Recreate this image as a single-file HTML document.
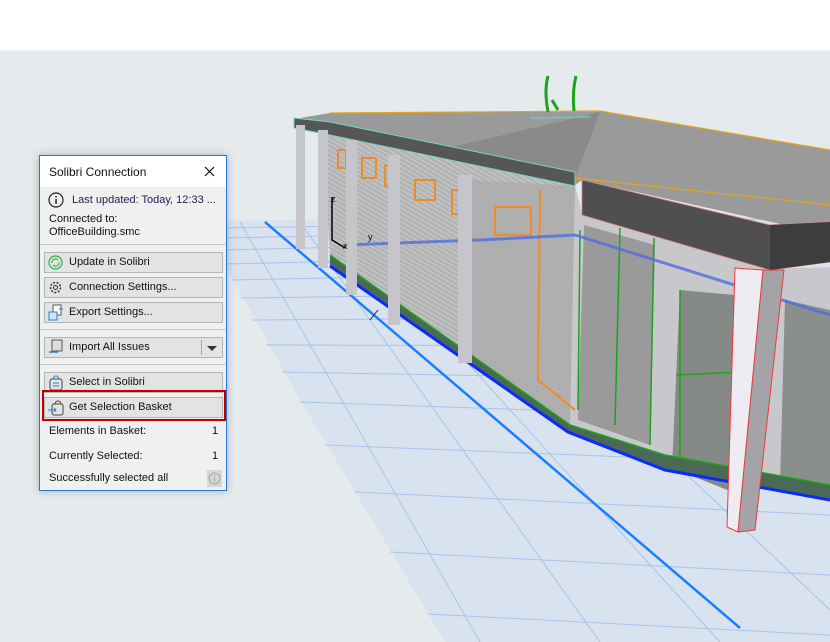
<!DOCTYPE html>
<html><head><style>
body{margin:0;width:830px;height:642px;overflow:hidden;background:#fff;font-family:"Liberation Sans",sans-serif;position:relative}
#scene{position:absolute;left:0;top:0}
.panel{position:absolute;left:39px;top:155px;width:186px;height:334px;background:#f0f0f0;border:1px solid #1f7ad6;box-shadow:0 0 8px rgba(0,0,0,.25);font-size:11px;color:#111}
.tb{position:absolute;left:0;top:0;right:0;height:31px;background:#fff}
.t{position:absolute;white-space:nowrap}
.btn{position:absolute;left:4px;width:177px;height:19px;border:1px solid #b5b5b5;background:#e3e3e3}
.btn span{position:absolute;left:24px;top:3px}
.sep{position:absolute;left:0;right:0;height:1px;background:#c8c8c8}
</style></head><body>
<svg id="scene" width="830" height="642" viewBox="0 0 830 642">
<defs>
<pattern id="h" width="4" height="4" patternUnits="userSpaceOnUse" patternTransform="rotate(-60)"><rect width="4" height="4" fill="#b4b4b4"/><line x1="0" y1="0" x2="0" y2="4" stroke="#d8d8d8" stroke-width="1.2"/></pattern>
</defs>
<rect x="0" y="50" width="830" height="592" fill="#e5eaed"/>
<rect x="0" y="50" width="830" height="1" fill="#f2f4f5"/>
<!-- ground grid -->
<polygon points="222,221 830,212 830,642 445,642 300,400 222,260" fill="#d9e3ef"/>
<g stroke="#a8c2ea" stroke-width="1" fill="none">
<line x1="222" y1="228" x2="830" y2="218"/><line x1="222" y1="238" x2="830" y2="226"/>
<line x1="222" y1="250" x2="830" y2="236"/><line x1="225" y1="264" x2="830" y2="250"/>
<line x1="232" y1="280" x2="830" y2="268"/><line x1="241" y1="298" x2="830" y2="290"/>
<line x1="252" y1="320" x2="830" y2="316"/><line x1="266" y1="345" x2="830" y2="346"/>
<line x1="282" y1="372" x2="830" y2="382"/><line x1="300" y1="402" x2="830" y2="420"/>
<line x1="325" y1="445" x2="830" y2="465"/><line x1="355" y1="492" x2="830" y2="515"/>
<line x1="390" y1="552" x2="830" y2="575"/><line x1="428" y1="614" x2="830" y2="635"/>
<line x1="240" y1="222" x2="480" y2="642"/><line x1="300" y1="222" x2="600" y2="642"/>
<line x1="340" y1="222" x2="720" y2="642"/><line x1="420" y1="222" x2="830" y2="610"/>
</g>
<line x1="265" y1="222" x2="740" y2="628" stroke="#1a7fff" stroke-width="2.5"/>
<!-- roof top -->
<polygon points="300,118 330,113 600,111 830,150 830,235 582,180 575,185 300,128" fill="#9a9a9a"/>
<polygon points="440,150 600,112 575,178" fill="#7a7a7a" opacity=".5"/>
<polyline points="330,113 600,111 830,150" stroke="#e8a317" stroke-width="1.2" fill="none"/>
<polyline points="574,178 830,205" stroke="#e8a317" stroke-width="1.2" fill="none"/>
<path d="M548,76 Q544,90 548,112 M552,100 L558,110 M576,76 Q572,92 574,111" stroke="#1aa51a" stroke-width="3" fill="none"/>
<line x1="530" y1="118" x2="590" y2="117" stroke="#5fd0c0" stroke-width="1.5"/>
<!-- walls -->
<polygon points="322,132 575,186 575,405 570,425 330,255" fill="url(#h)"/>
<polygon points="470,180 575,186 575,405 570,425 470,355" fill="#aaaaaa" opacity=".7"/>
<polygon points="582,213 770,268 830,268 830,492 665,462 570,425 575,185" fill="#c8c8cc"/>
<polygon points="584,225 655,245 650,445 578,420" fill="#9a9a9a"/>
<polygon points="680,290 745,296 740,495 672,468" fill="#858a87"/>
<polygon points="785,300 830,310 830,495 780,485" fill="#8a8f8c"/>
<path d="M680,290 L680,468 M676,375 L740,372 M580,230 L578,410 M620,228 L615,425 M654,238 L650,445" stroke="#1aa51a" stroke-width="1.5" fill="none"/>
<g stroke="#f08c28" stroke-width="2" fill="none">
<rect x="338" y="150" width="8" height="18"/><rect x="362" y="158" width="14" height="20"/>
<rect x="385" y="166" width="6" height="20"/><rect x="415" y="180" width="20" height="20"/>
<rect x="452" y="190" width="10" height="24"/><rect x="495" y="207" width="36" height="28"/>
<polyline points="540,190 538,380 575,410"/>
</g>
<polygon points="330,255 570,425 665,455 830,485 830,500 665,470 568,432 330,266" fill="#4a6a55"/>
<polyline points="330,255 570,425 665,455 830,485" stroke="#1aa51a" stroke-width="1.5" fill="none"/>
<polyline points="330,266 568,432 665,470 830,500" stroke="#0a2bff" stroke-width="3" fill="none"/>
<polyline points="345,245 480,240 575,235 830,315" stroke="#4d6ee0" stroke-width="3" fill="none" opacity=".8"/>
<polygon points="294,118 330,122 575,172 575,186 330,135 294,128" fill="#565656" stroke="#6fd6c8" stroke-width="1"/>
<polygon points="582,180 770,225 830,222 830,262 770,270 582,215" fill="#4f4f4f" stroke="#d87a7a" stroke-width=".8"/>
<polygon points="770,225 830,222 830,262 770,270" fill="#3d3d3d"/>
<g fill="#c5c5cb">
<rect x="296" y="125" width="9" height="124"/><rect x="318" y="130" width="10" height="138"/>
<rect x="346" y="140" width="11" height="155"/><rect x="388" y="155" width="12" height="170"/>
<rect x="458" y="175" width="14" height="188"/>
</g>
<polygon points="735,268 763,270 738,532 727,527" fill="#ececf2" stroke="#f03a3a" stroke-width="1"/>
<polygon points="763,270 784,270 755,530 738,532" fill="#a3a3a8" stroke="#f03a3a" stroke-width="1"/>
<path d="M332,197 L332,240 L345,248" stroke="#000" stroke-width="1.5" fill="none"/>
<text x="331" y="202" font-size="9" font-family="Liberation Sans">z</text>
<text x="368" y="240" font-size="9" font-family="Liberation Sans">y</text>
<text x="343" y="249" font-size="9" font-family="Liberation Sans">x</text>
<line x1="370" y1="320" x2="378" y2="310" stroke="#222" stroke-width="1"/>
</svg>
<div class="panel">
 <div class="tb"><div class="t" style="left:9px;top:9px;font-size:12px">Solibri Connection</div>
 <svg style="position:absolute;left:164px;top:10px" width="11" height="11"><path d="M1,1L10,10M10,1L1,10" stroke="#111" stroke-width="1.2"/></svg></div>
 <svg style="position:absolute;left:8px;top:36px" width="16" height="16"><circle cx="8" cy="8" r="7" fill="none" stroke="#222" stroke-width="1.2"/><rect x="7.3" y="7" width="1.5" height="5" fill="#222"/><rect x="7.3" y="4" width="1.5" height="1.5" fill="#222"/></svg>
 <div class="t" style="left:32px;top:38px;color:#2a1a50">Last updated: Today, 12:33 ...</div>
 <div class="t" style="left:9px;top:57px">Connected to:</div>
 <div class="t" style="left:9px;top:70px">OfficeBuilding.smc</div>
 <div class="sep" style="top:88px"></div>
 <div class="btn" style="top:96px"><svg style="position:absolute;left:3px;top:2px" width="15" height="15"><circle cx="7.5" cy="7.5" r="6.5" fill="none" stroke="#2cb34a" stroke-width="1.2"/><path d="M4,8 A3.5,3.5 0 0 1 10,5 M11,7 A3.5,3.5 0 0 1 5,10" stroke="#2cb34a" fill="none"/></svg><span>Update in Solibri</span></div>
 <div class="btn" style="top:121px"><svg style="position:absolute;left:3px;top:2px" width="15" height="15"><circle cx="7.5" cy="7.5" r="5" fill="none" stroke="#333" stroke-width="1.5" stroke-dasharray="2 1.5"/><circle cx="7.5" cy="7.5" r="2" fill="none" stroke="#333"/></svg><span>Connection Settings...</span></div>
 <div class="btn" style="top:146px"><svg style="position:absolute;left:3px;top:1px" width="16" height="17"><rect x="5" y="1" width="8" height="10" fill="#fff" stroke="#555"/><rect x="1" y="8" width="8" height="8" fill="#cfe4fa" stroke="#2a7fd4"/><path d="M11,5h4" stroke="#2a7fd4"/></svg><span>Export Settings...</span></div>
 <div class="sep" style="top:173px"></div>
 <div class="btn" style="top:181px"><svg style="position:absolute;left:3px;top:1px" width="16" height="17"><rect x="4" y="1" width="10" height="11" fill="#ddd" stroke="#555"/><path d="M1,13h9" stroke="#2a7fd4" stroke-width="1.5"/></svg><span>Import All Issues</span><div style="position:absolute;left:156px;top:2px;width:1px;height:15px;background:#aaa"></div><div style="position:absolute;left:162px;top:8px;border:5px solid transparent;border-top:5px solid #333;border-bottom:0"></div></div>
 <div class="sep" style="top:208px"></div>
 <div class="btn" style="top:216px"><svg style="position:absolute;left:3px;top:1px" width="16" height="17"><rect x="2" y="5" width="12" height="11" rx="2" fill="none" stroke="#444"/><path d="M5,5 A3,3 0 0 1 11,5 M5,9h6M5,12h6" stroke="#2a7fd4" fill="none"/></svg><span>Select in Solibri</span></div>
 <div style="position:absolute;left:2px;top:234px;width:180px;height:27px;border:2px solid #c00000"></div>
 <div class="btn" style="top:241px"><svg style="position:absolute;left:3px;top:1px" width="16" height="17"><rect x="4" y="5" width="11" height="11" rx="2" fill="none" stroke="#444"/><path d="M7,5 A3,3 0 0 1 13,5" stroke="#444" fill="none"/><path d="M0,11h8M6,9l2,2-2,2" stroke="#2a7fd4" fill="none"/></svg><span>Get Selection Basket</span></div>
 <div class="t" style="left:9px;top:269px">Elements in Basket:</div><div class="t" style="left:172px;top:269px">1</div>
 <div class="t" style="left:9px;top:294px">Currently Selected:</div><div class="t" style="left:172px;top:294px">1</div>
 <div class="t" style="left:9px;top:316px">Successfully selected all</div>
 <div style="position:absolute;left:167px;top:314px;width:15px;height:17px;background:#d6d6d6"><svg width="15" height="17"><circle cx="7.5" cy="8.5" r="5.5" fill="none" stroke="#aaa"/><rect x="7" y="7.5" width="1.2" height="4" fill="#aaa"/><rect x="7" y="5" width="1.2" height="1.2" fill="#aaa"/></svg></div>
</div>
</body></html>
